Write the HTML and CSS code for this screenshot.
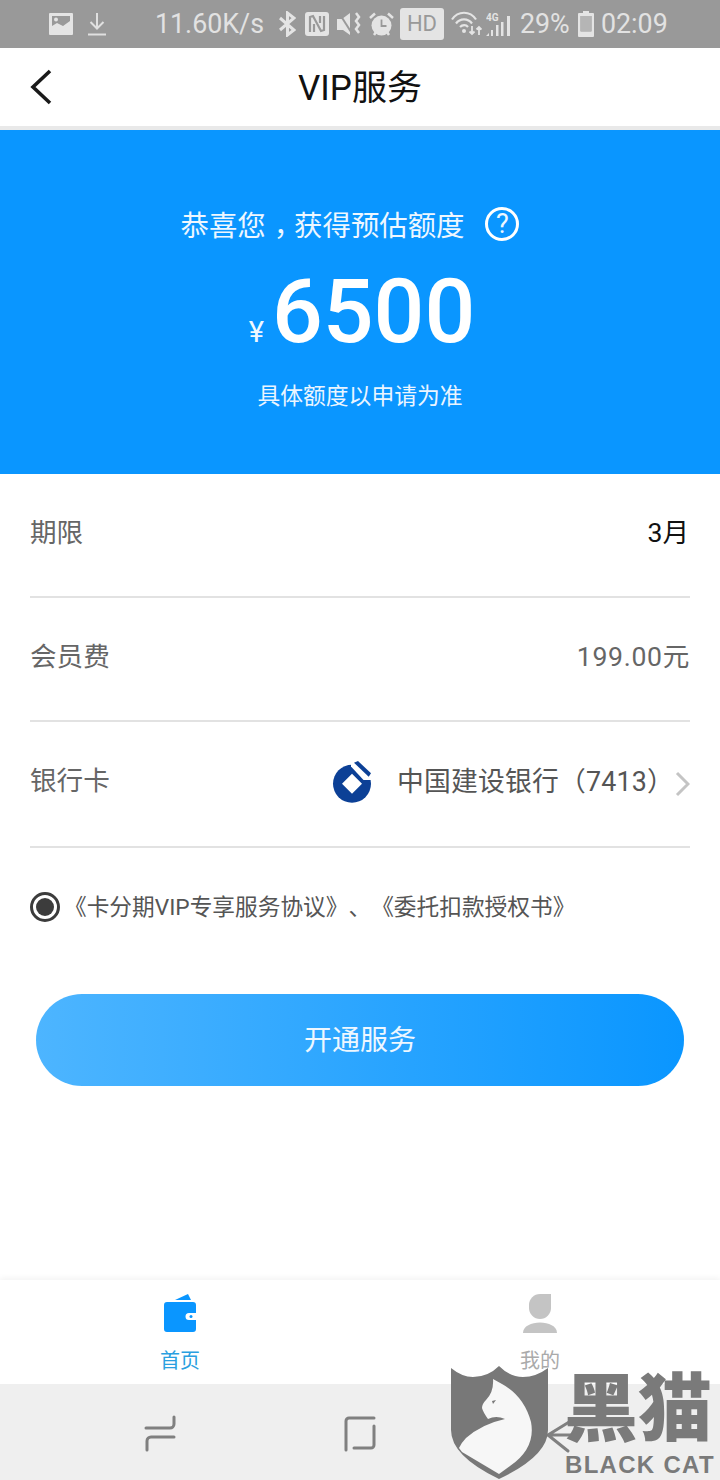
FILE: index.html
```html
<!DOCTYPE html>
<html lang="zh-CN">
<head>
<meta charset="utf-8">
<title>VIP服务</title>
<link rel="stylesheet" href="styles.css">
</head>
<body>
<div class="page">
  <div class="status">
    <svg class="st-img" width="24" height="22" viewBox="0 0 24 22"><path fill="#e4e4e4" fill-rule="evenodd" d="M1 0h22a1 1 0 0 1 1 1v20a1 1 0 0 1-1 1H1a1 1 0 0 1-1-1V1a1 1 0 0 1 1-1zM3 3v10l5-3 6 3 7-5V3z"/><circle cx="7" cy="6.500" r="2" fill="#e4e4e4"/></svg>
    <svg class="st-dl" width="18" height="24" viewBox="0 0 18 24"><path fill="none" stroke="#e0e0e0" stroke-width="2" d="M9 1v15M2.500 10 9 16.500 15.500 10M0 22.500h18"/></svg>
    <span class="st-speed">11.60K/s</span>
    <svg class="st-bt" width="17" height="26" viewBox="0 0 17 26"><path fill="none" stroke="#e4e4e4" stroke-width="3" d="M1 7l14 12-6.500 5V2L15 7 1 19"/></svg>
    <svg class="st-n" width="24" height="24" viewBox="0 0 24 24"><rect width="24" height="24" rx="3" fill="#e4e4e4"/><path fill="none" stroke="#999" stroke-width="2.200" d="M5 20V5l3-1 8 15 3-1V4M9 20v-8M15 4v7"/></svg>
    <svg class="st-mute" width="25" height="24" viewBox="0 0 25 24"><path fill="#e4e4e4" d="M0 7h5l8-6v22l-7-5H0z"/><path stroke="#999" stroke-width="2" d="M2 1l14 22"/><path fill="none" stroke="#e4e4e4" stroke-width="2.500" d="M19 1l3 4-3 4 3 4-3 4 3 4"/></svg>
    <svg class="st-alarm" width="25" height="25" viewBox="0 0 25 25"><circle cx="12.500" cy="13.500" r="10" fill="#e4e4e4"/><path fill="none" stroke="#999" stroke-width="1.800" d="M12.500 7.500V14h5"/><path stroke="#e4e4e4" stroke-width="2.500" d="M1 6l5-4.500M24 6l-5-4.500M5 23l2-3M20 23l-2-3"/></svg>
    <span class="st-hd">HD</span>
    <svg class="st-wifi" width="31" height="26" viewBox="0 0 31 26"><path fill="none" stroke="#e4e4e4" stroke-width="2.200" d="M1 8.500C7-.5 19-.5 25 8.500M5 12.500c4-5.500 12-5.500 16 0M9 16c2.500-2.500 6-2.500 8 0"/><circle cx="13" cy="20" r="2" fill="#e4e4e4"/><path fill="none" stroke="#e4e4e4" stroke-width="1.800" d="M21 15v8m-2.500-2.500L21 23l2.500-2.500M28 24v-8m-2.500 2.500L28 16l2.500 2.500"/></svg>
    <svg class="st-sig" width="26" height="26" viewBox="0 0 26 26"><path fill="#e4e4e4" d="M0 25l3-3v3zM5 19h2v6H5zM10 14h2.500v11H10zM15 11h2.500v14H15zM21 5h3v20h-3z"/><text x="0" y="10" class="st-4g">4G</text></svg>
    <span class="st-batt-text">29%</span>
    <svg class="st-batt" width="16" height="26" viewBox="0 0 16 26"><path fill-rule="evenodd" fill="#e4e4e4" d="M5 0h6v2h4a1 1 0 0 1 1 1v22a1 1 0 0 1-1 1H1a1 1 0 0 1-1-1V3a1 1 0 0 1 1-1h4zM2.500 5v15.500h11V5z"/><rect x="2.500" y="5" width="11" height="15" fill="#b5b5b5"/></svg>
    <span class="st-time">02:09</span>
  </div>

  <header class="topbar">
    <svg class="back" width="24" height="36" viewBox="0 0 24 36"><path fill="none" stroke="#1a1a1a" stroke-width="3.600" d="M22 2 5 18l17 16"/></svg>
    <h1 class="title">VIP服务</h1>
  </header>

  <section class="hero">
    <div class="hero-head">
      <span class="hero-title">恭喜您<span class="comma">，</span>获得预估额度</span>
      <span class="help">?</span>
    </div>
    <div class="amount"><span class="yen">¥</span><span class="num">6500</span></div>
    <div class="hero-note">具体额度以申请为准</div>
  </section>

  <section class="form">
    <div class="row"><span class="label">期限</span><span class="val val-dark">3月</span></div>
    <div class="row"><span class="label">会员费</span><span class="val val-fee">199.00元</span></div>
    <div class="row row-bank">
      <span class="label">银行卡</span>
      <div class="bank">
        <svg class="bank-logo" width="40" height="42" viewBox="0 0 40 42">
          <circle cx="20" cy="22.700" r="19" fill="#0c4096"/>
          <path fill="#fff" d="M20 12.700 30 22.700 20 32.700 10 22.700z"/>
          <path fill="#fff" d="M19 5.500 31.500 19H41V0H19z"/>
          <path fill="#0c4096" d="M22 1.700 26 0 39 12.300 36.700 15.700z"/>
        </svg>
        <span class="bank-name">中国建设银行（7413）</span>
        <svg class="chev" width="16" height="26" viewBox="0 0 16 26"><path fill="none" stroke="#c4c4c4" stroke-width="3" d="M3 2l11 11L3 24"/></svg>
      </div>
    </div>
  </section>

  <div class="agree">
    <span class="radio"><span class="radio-dot"></span></span>
    <span class="agree-text">《卡分期VIP专享服务协议》、《委托扣款授权书》</span>
  </div>

  <button class="cta">开通服务</button>

  <div class="spacer"></div>

  <nav class="tabs">
    <div class="tab tab-on">
      <svg width="34" height="40" viewBox="0 0 34 40"><path fill="#0a96ff" d="M12 6 25 0l3 6z"/><path fill="#0a96ff" d="M4 8h26a3 3 0 0 1 3 3v8h-7a3.500 3.500 0 0 0 0 7h7v9a3 3 0 0 1-3 3H4a3 3 0 0 1-3-3V11a3 3 0 0 1 3-3z"/><circle cx="28" cy="22.500" r="1.500" fill="#0a96ff"/></svg>
      <span>首页</span>
    </div>
    <div class="tab">
      <svg width="34" height="40" viewBox="0 0 34 40"><path fill="#c4c4c4" d="M17 0h11v14a11 11 0 0 1-22 0v-3A11 11 0 0 1 17 0z"/><path fill="#c4c4c4" d="M0 39c0-14 34-14 34 0z"/></svg>
      <span>我的</span>
    </div>
  </nav>

  <div class="navbar">
    <svg width="36" height="40" viewBox="0 0 36 40"><path fill="none" stroke="#808080" stroke-width="3" stroke-linecap="round" d="M32 2v7a4 4 0 0 1-4 4H4M32 22H9a4 4 0 0 0-4 4v9"/></svg>
    <svg width="36" height="40" viewBox="0 0 36 40"><path fill="none" stroke="#808080" stroke-width="3" stroke-linecap="round" d="M32 3H7a3 3 0 0 0-3 3v29M32 11v19a3 3 0 0 1-3 3H12"/></svg>
    <svg width="36" height="40" viewBox="0 0 36 40"><path fill="none" stroke="#808080" stroke-width="3" stroke-linecap="round" d="M32 4 6 20h26M6 20l20 16"/></svg>
  </div>

  <div class="mark">
    <svg class="shield" width="100" height="116" viewBox="0 0 100 116">
      <path fill="#787878" d="M1 4Q12 13 23 13 38 13 49 2 60 13 73 13 86 13 98 4V66Q98 92 49 115 1 92 1 66z"/>
      <path fill="#f7f7f7" d="M43 15 52 20Q74 32 81 58 86 84 60 102L49 110 12 88 9 84Q12 78 16 74 32 60 55 55 46 51 38 55 33 48 32 44 32 40 36 36 44 28 43 15z"/>
      <path fill="#787878" d="M42 37l4-1-3 4z"/>
    </svg>
    <span class="mark-cn">黑猫</span>
    <span class="mark-en">BLACK CAT</span>
  </div>
</div>
</body>
</html>
```

FILE: styles.css
```css
* { box-sizing: border-box; }
html, body { margin: 0; padding: 0; }
body { font-family: Roboto, "Noto Sans CJK SC", sans-serif; background: #fff; }
.page { position: relative; width: 720px; height: 1480px; display: flex; flex-direction: column; overflow: hidden; background: #fff; }

.status { height: 48px; flex: none; background: #999; color: #e2e2e2; display: flex; align-items: center; padding-left: 49px; font-size: 26.800px; }
.status svg { flex: none; display: block; }
.st-dl { margin-left: 15px; }
.st-speed { margin-left: 49px; width: 108px; white-space: nowrap; }
.st-bt { margin-left: 16px; }
.st-n { margin-left: 9px; }
.st-mute { margin-left: 8px; }
.st-alarm { margin-left: 7px; }
.st-hd { margin-left: 6px; width: 44px; height: 32px; background: #e4e4e4; color: #999; border-radius: 3px; font-size: 22px; line-height: 32px; text-align: center; }
.st-wifi { margin-left: 7px; }
.st-sig { margin-left: 4px; }
.st-4g { font-size: 10px; font-weight: 700; fill: #e4e4e4; }
.st-batt-text { margin-left: 8px; width: 48px; white-space: nowrap; }
.st-batt { margin-left: 10px; }
.st-time { margin-left: 7px; white-space: nowrap; }

.topbar { height: 82px; flex: none; display: flex; align-items: center; justify-content: center; position: relative; background: #fff; border-bottom: 4px solid #e9e9e9; padding-bottom: 5px; }
.back { position: absolute; left: 28px; top: 21px; }
.title { margin: 0; font-size: 35px; font-weight: 400; color: #111; }

.hero { height: 344px; flex: none; background: #0a96ff; color: #fff; display: flex; flex-direction: column; align-items: center; padding-top: 72px; }
.hero-head { display: flex; align-items: center; height: 44px; font-size: 28.400px; color: #eef7ff; white-space: nowrap; padding-right: 20px; }
.hero-title { padding-bottom: 2px; }
.comma { margin-left: 8px; letter-spacing: -8px; }
.help { width: 34px; height: 34px; margin-left: 21px; border: 3px solid #fff; border-radius: 50%; font-size: 27px; line-height: 28px; text-align: center; }
.amount { display: flex; align-items: baseline; height: 104px; margin-top: 14px; padding-left: 4px; }
.yen { font-size: 29px; margin-right: 8px; color: #f0f8ff; }
.num { font-size: 89.500px; font-weight: 500; line-height: 104px; }
.hero-note { margin-top: 16px; font-size: 22.800px; line-height: 34px; color: #eaf5ff; white-space: nowrap; }

.form { flex: none; padding: 0 30px; }
.row { height: 124px; border-bottom: 2px solid #e2e2e2; display: flex; justify-content: space-between; align-items: flex-start; padding-top: 40px; font-size: 26.600px; line-height: 38px; color: #666; }
.row-bank { height: 126px; }
.label { color: #666; }
.val { color: #666; }
.val-dark { color: #111; padding-right: 1px; }
.val-fee { letter-spacing: 0.7px; }
.bank { display: flex; align-items: center; height: 44px; margin-top: -2px; }
.bank-logo { margin-right: 25px; }
.bank-name { color: #555; white-space: nowrap; font-size: 26.800px; letter-spacing: 0.2px; }
.chev { margin-top: 4px; }

.agree { flex: none; display: flex; align-items: center; height: 34px; margin-top: 42px; padding-left: 30px; font-size: 22.700px; color: #555; white-space: nowrap; }
.agree-text { text-spacing-trim: space-all; padding-bottom: 4px; }
.radio { width: 30px; height: 30px; border: 3px solid #3c3c3c; border-radius: 50%; display: flex; align-items: center; justify-content: center; margin-right: 4px; flex: none; }
.radio-dot { width: 18px; height: 18px; border-radius: 50%; background: #3c3c3c; }

.cta { flex: none; display: block; width: 648px; height: 92px; margin: 70px 0 0 36px; padding: 0 0 4px; border: 0; border-radius: 46px; background: linear-gradient(90deg, #4db5ff, #0a96ff); color: #eef7ff; font-family: inherit; font-size: 28px; }

.spacer { flex: 1; background: #fff; }

.tabs { height: 104px; flex: none; display: flex; background: #fff; box-shadow: 0 -2px 6px rgba(0,0,0,.05); }
.tab { flex: 1; display: flex; flex-direction: column; align-items: center; padding-top: 14px; font-size: 20px; line-height: 26px; color: #aaa; }
.tab svg { display: block; margin-bottom: 14px; }
.tab-on { color: #2a9fe0; }

.navbar { height: 96px; flex: none; background: #efefef; display: flex; justify-content: flex-start; padding: 31px 0 0 142px; gap: 164px; }
.navbar svg { display: block; }

.mark { position: absolute; left: 450px; top: 1364px; width: 270px; height: 116px; }
.shield { position: absolute; left: 0; top: 0; display: block; }
.mark-cn { position: absolute; left: 114px; top: 11px; font-size: 74px; line-height: 70px; font-weight: 900; color: #7a7a7a; white-space: nowrap; }
.mark-en { position: absolute; left: 115px; top: 90px; font-family: "Liberation Sans", sans-serif; font-size: 24px; line-height: 22px; font-weight: 700; color: #7a7a7a; letter-spacing: 1.300px; white-space: nowrap; }
```
